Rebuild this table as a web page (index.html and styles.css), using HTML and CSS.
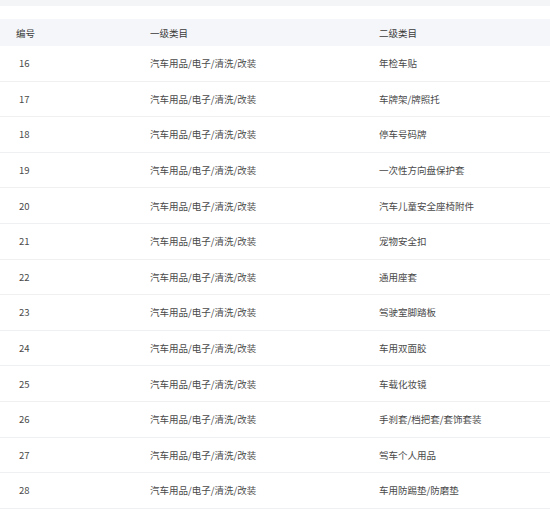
FILE: index.html
```html
<!DOCTYPE html>
<html lang="zh">
<head>
<meta charset="utf-8">
<link rel="stylesheet" href="styles.css">
</head>
<body>
<div class="topbar"></div>
<div class="table">
  <div class="row head"><div>编号</div><div>一级类目</div><div>二级类目</div></div>
  <div class="row"><div class="num">16</div><div>汽车用品/电子/清洗/改装</div><div>年检车贴</div></div>
  <div class="row"><div class="num">17</div><div>汽车用品/电子/清洗/改装</div><div>车牌架/牌照托</div></div>
  <div class="row"><div class="num">18</div><div>汽车用品/电子/清洗/改装</div><div>停车号码牌</div></div>
  <div class="row"><div class="num">19</div><div>汽车用品/电子/清洗/改装</div><div>一次性方向盘保护套</div></div>
  <div class="row"><div class="num">20</div><div>汽车用品/电子/清洗/改装</div><div>汽车儿童安全座椅附件</div></div>
  <div class="row"><div class="num">21</div><div>汽车用品/电子/清洗/改装</div><div>宠物安全扣</div></div>
  <div class="row"><div class="num">22</div><div>汽车用品/电子/清洗/改装</div><div>通用座套</div></div>
  <div class="row"><div class="num">23</div><div>汽车用品/电子/清洗/改装</div><div>驾驶室脚踏板</div></div>
  <div class="row"><div class="num">24</div><div>汽车用品/电子/清洗/改装</div><div>车用双面胶</div></div>
  <div class="row"><div class="num">25</div><div>汽车用品/电子/清洗/改装</div><div>车载化妆镜</div></div>
  <div class="row"><div class="num">26</div><div>汽车用品/电子/清洗/改装</div><div>手刹套/档把套/套饰套装</div></div>
  <div class="row"><div class="num">27</div><div>汽车用品/电子/清洗/改装</div><div>驾车个人用品</div></div>
  <div class="row"><div class="num">28</div><div>汽车用品/电子/清洗/改装</div><div>车用防踢垫/防磨垫</div></div>
</div>
</body>
</html>
```
FILE: styles.css
```css
html, body {
  margin: 0;
  padding: 0;
  background: #ffffff;
}
body {
  font-family: "Noto Sans CJK SC", "Noto Sans", sans-serif;
  font-size: 9.5px;
  color: #4a4a4a;
}
.topbar {
  height: 6px;
  background: #f4f5f7;
  margin-bottom: 13px;
}
.row {
  display: grid;
  grid-template-columns: 134px 229px 1fr;
  align-items: center;
  padding-left: 16px;
  height: 34.6px;
  border-bottom: 1px solid #eff0f2;
}
.row.head {
  height: 27px;
  background: #f5f6f9;
  border-bottom: none;
  color: #3a3a3a;
}
.num {
  padding-left: 3px;
}
```
